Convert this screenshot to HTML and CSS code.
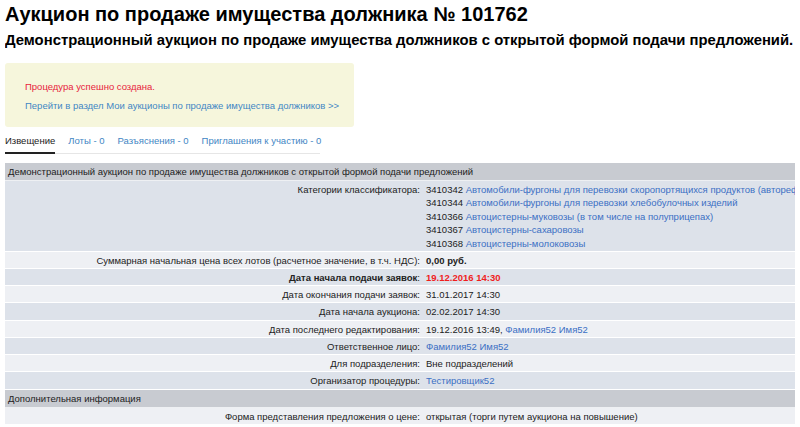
FILE: index.html
```html
<!DOCTYPE html>
<html lang="ru">
<head>
    <meta charset="UTF-8">
    <title>Аукцион № 101762</title>
    <meta name="viewport" content="width=device-width, initial-scale=1.0">
    <link rel="stylesheet" href="styles.css">
</head>
<body>
    <h1>Аукцион по продаже имущества должника № 101762</h1>
    <h2>Демонстрационный аукцион по продаже имущества должников с открытой формой подачи предложений.</h2>

    <div class="notice">
        <p class="notice-ok">Процедура успешно создана.</p>
        <p><a href="#">Перейти в раздел Мои аукционы по продаже имущества должников &gt;&gt;</a></p>
    </div>

    <div class="tabs">
        <a class="tab active" href="#">Извещение</a>
        <a class="tab" href="#">Лоты - 0</a>
        <a class="tab" href="#">Разъяснения - 0</a>
        <a class="tab" href="#">Приглашения к участию - 0</a>
    </div>

    <table class="info">
        <tr class="section"><td colspan="2">Демонстрационный аукцион по продаже имущества должников с открытой формой подачи предложений</td></tr>
        <tr class="dark">
            <td class="label">Категории классификатора:</td>
            <td class="value">
                3410342 <a href="#">Автомобили-фургоны для перевозки скоропортящихся продуктов (авторефрижераторы)</a><br>
                3410344 <a href="#">Автомобили-фургоны для перевозки хлебобулочных изделий</a><br>
                3410366 <a href="#">Автоцистерны-муковозы (в том числе на полуприцепах)</a><br>
                3410367 <a href="#">Автоцистерны-сахаровозы</a><br>
                3410368 <a href="#">Автоцистерны-молоковозы</a>
            </td>
        </tr>
        <tr class="light">
            <td class="label">Суммарная начальная цена всех лотов (расчетное значение, в т.ч. НДС):</td>
            <td class="value"><b>0,00 руб.</b></td>
        </tr>
        <tr class="dark">
            <td class="label"><b>Дата начала подачи заявок</b>:</td>
            <td class="value"><b class="alert">19.12.2016 14:30</b></td>
        </tr>
        <tr class="light">
            <td class="label">Дата окончания подачи заявок:</td>
            <td class="value">31.01.2017 14:30</td>
        </tr>
        <tr class="dark">
            <td class="label">Дата начала аукциона:</td>
            <td class="value">02.02.2017 14:30</td>
        </tr>
        <tr class="light">
            <td class="label">Дата последнего редактирования:</td>
            <td class="value">19.12.2016 13:49, <a href="#">Фамилия52 Имя52</a></td>
        </tr>
        <tr class="dark">
            <td class="label">Ответственное лицо:</td>
            <td class="value"><a href="#">Фамилия52 Имя52</a></td>
        </tr>
        <tr class="light">
            <td class="label">Для подразделения:</td>
            <td class="value">Вне подразделений</td>
        </tr>
        <tr class="dark">
            <td class="label">Организатор процедуры:</td>
            <td class="value"><a href="#">Тестировщик52</a></td>
        </tr>
        <tr class="section"><td colspan="2">Дополнительная информация</td></tr>
        <tr class="light">
            <td class="label">Форма представления предложения о цене:</td>
            <td class="value">открытая (торги путем аукциона на повышение)</td>
        </tr>
    </table>
</body>
</html>
```

FILE: styles.css
```css
body {
    margin: 0 5px;
    font-family: "Liberation Sans", Arial, sans-serif;
    font-size: 9.5px;
    color: #222;
    background: #fff;
    overflow: hidden;
}
a {
    color: #3b6fc4;
    text-decoration: none;
}
h1 {
    margin: 2px 0 0;
    font-size: 20px;
    line-height: 24px;
    color: #000;
}
h2 {
    margin: 4px 0 0;
    font-size: 14.85px;
    line-height: 20px;
    color: #000;
    white-space: nowrap;
}
.notice {
    width: 329px;
    margin-top: 13px;
    padding: 18px 0 16px 20px;
    background: #f6f6dc;
    border-radius: 3px;
    white-space: nowrap;
}
.notice p {
    margin: 0 0 8px;
    line-height: 11px;
}
.notice p:last-child {
    margin-bottom: 0;
}
.notice-ok {
    color: #e8243c;
}
.notice a {
    color: #3f86c4;
}
.tabs {
    display: flex;
    gap: 13px;
    width: 315px;
    margin-top: 8px;
    border-bottom: 1px solid #e6e6e6;
}
.tab {
    padding: 0 0 5px;
    line-height: 12px;
    color: #3f86c4;
    margin-bottom: -1px;
    border-bottom: 2px solid transparent;
    white-space: nowrap;
}
.tab.active {
    color: #222;
    border-bottom-color: #222;
}
.info {
    margin-top: 9px;
    border-collapse: collapse;
}
.info td {
    padding: 2px 3px 1px;
    line-height: 13px;
    white-space: nowrap;
    vertical-align: top;
    border-bottom: 1px solid #fff;
}
.info .section td {
    background: #c8cbd1;
    padding: 2px 3px;
    border-bottom: 1px solid #eef0f3;
}
.info .dark td {
    background: #dde2ea;
}
.info .light td {
    background: #eef0f4;
}
.info .label {
    width: 412px;
    min-width: 412px;
    text-align: right;
}
.info .value {
    padding-left: 3px;
    width: 100%;
}
.info .dark .value {
    line-height: 13.4px;
}
.info .alert {
    color: #f01e1e;
}
```
